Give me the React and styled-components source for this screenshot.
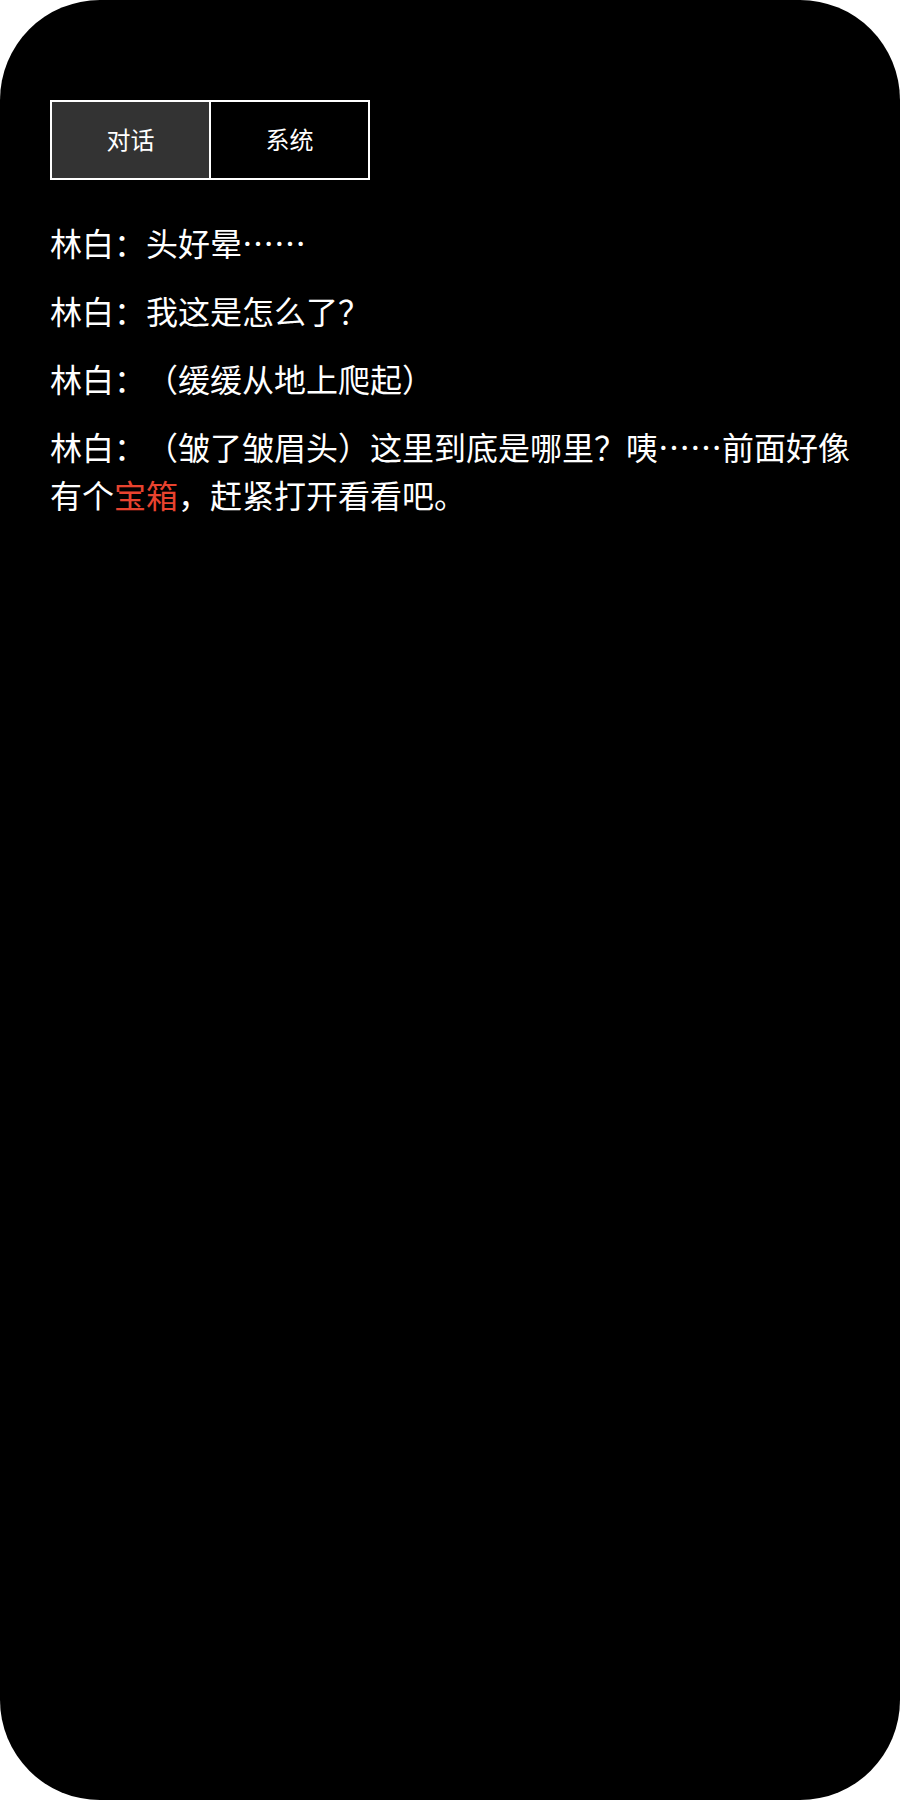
import styled, { createGlobalStyle } from "styled-components"

const GlobalStyle = createGlobalStyle`
  html, body {
    margin: 0;
    padding: 0;
    background: #fff;
  }
  body {
    font-family: "Noto Sans CJK SC", "Noto Sans", sans-serif;
    text-spacing-trim: space-all;
  }
`

const Screen = styled.div`
  width: 900px;
  height: 1800px;
  box-sizing: border-box;
  background: #000;
  border-radius: 100px;
  padding: 100px 50px;
  color: #fff;
  overflow: hidden;
`

const Tabs = styled.div`
  display: flex;
  width: 320px;
  height: 80px;
  box-sizing: border-box;
  border: 2px solid #fff;
`

const Tab = styled.button`
  flex: 1;
  display: flex;
  align-items: center;
  justify-content: center;
  margin: 0;
  padding: 0 0 4px;
  border: none;
  border-left: ${(p) => (p.$first ? "none" : "2px solid #fff")};
  background: ${(p) => (p.$active ? "#333" : "#000")};
  color: #fff;
  font-family: inherit;
  font-size: 24px;
  cursor: pointer;
`

const Log = styled.div`
  margin-top: 38px;
  display: flex;
  flex-direction: column;
  gap: 20px;
`

const Line = styled.p`
  margin: 0;
  font-size: 32px;
  line-height: 48px;
  word-break: break-all;
  text-spacing-trim: space-all;
`

const Mark = styled.span`
  color: #e8432f;
`

const App = () => {
  return (
    <>
      <GlobalStyle />
      <Screen>
        <Tabs>
          <Tab $first $active>对话</Tab>
          <Tab>系统</Tab>
        </Tabs>
        <Log>
          <Line>林白：头好晕……</Line>
          <Line>林白：我这是怎么了？</Line>
          <Line>林白：（缓缓从地上爬起）</Line>
          <Line>
            林白：（皱了皱眉头）这里到底是哪里？咦……前面好像有个<Mark>宝箱</Mark>，赶紧打开看看吧。
          </Line>
        </Log>
      </Screen>
    </>
  )
}

export default App
